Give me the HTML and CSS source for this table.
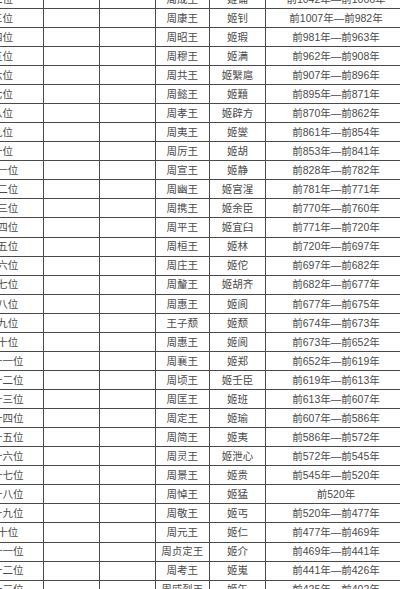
FILE: index.html
```html
<!DOCTYPE html>
<html lang="zh-CN">
<head>
<meta charset="utf-8">
<title>周朝君主列表</title>
<link rel="stylesheet" href="styles.css">
</head>
<body>
<table class="reign-table">
  <colgroup>
    <col class="c-order">
    <col class="c-blank">
    <col class="c-blank2">
    <col class="c-title">
    <col class="c-name">
    <col class="c-years">
  </colgroup>
  <tbody>
    <tr><td>二位</td><td></td><td></td><td>周成王</td><td>姬诵</td><td>前1042年—前1006年</td></tr>
    <tr><td>三位</td><td></td><td></td><td>周康王</td><td>姬钊</td><td>前1007年—前982年</td></tr>
    <tr><td>四位</td><td></td><td></td><td>周昭王</td><td>姬瑕</td><td>前981年—前963年</td></tr>
    <tr><td>五位</td><td></td><td></td><td>周穆王</td><td>姬满</td><td>前962年—前908年</td></tr>
    <tr><td>六位</td><td></td><td></td><td>周共王</td><td>姬繄扈</td><td>前907年—前896年</td></tr>
    <tr><td>七位</td><td></td><td></td><td>周懿王</td><td>姬囏</td><td>前895年—前871年</td></tr>
    <tr><td>八位</td><td></td><td></td><td>周孝王</td><td>姬辟方</td><td>前870年—前862年</td></tr>
    <tr><td>九位</td><td></td><td></td><td>周夷王</td><td>姬燮</td><td>前861年—前854年</td></tr>
    <tr><td>十位</td><td></td><td></td><td>周厉王</td><td>姬胡</td><td>前853年—前841年</td></tr>
    <tr><td>十一位</td><td></td><td></td><td>周宣王</td><td>姬静</td><td>前828年—前782年</td></tr>
    <tr><td>十二位</td><td></td><td></td><td>周幽王</td><td>姬宫湦</td><td>前781年—前771年</td></tr>
    <tr><td>十三位</td><td></td><td></td><td>周携王</td><td>姬余臣</td><td>前770年—前760年</td></tr>
    <tr><td>十四位</td><td></td><td></td><td>周平王</td><td>姬宜臼</td><td>前771年—前720年</td></tr>
    <tr><td>十五位</td><td></td><td></td><td>周桓王</td><td>姬林</td><td>前720年—前697年</td></tr>
    <tr><td>十六位</td><td></td><td></td><td>周庄王</td><td>姬佗</td><td>前697年—前682年</td></tr>
    <tr><td>十七位</td><td></td><td></td><td>周釐王</td><td>姬胡齐</td><td>前682年—前677年</td></tr>
    <tr><td>十八位</td><td></td><td></td><td>周惠王</td><td>姬阆</td><td>前677年—前675年</td></tr>
    <tr><td>十九位</td><td></td><td></td><td>王子颓</td><td>姬颓</td><td>前674年—前673年</td></tr>
    <tr><td>二十位</td><td></td><td></td><td>周惠王</td><td>姬阆</td><td>前673年—前652年</td></tr>
    <tr><td>二十一位</td><td></td><td></td><td>周襄王</td><td>姬郑</td><td>前652年—前619年</td></tr>
    <tr><td>二十二位</td><td></td><td></td><td>周顷王</td><td>姬壬臣</td><td>前619年—前613年</td></tr>
    <tr><td>二十三位</td><td></td><td></td><td>周匡王</td><td>姬班</td><td>前613年—前607年</td></tr>
    <tr><td>二十四位</td><td></td><td></td><td>周定王</td><td>姬瑜</td><td>前607年—前586年</td></tr>
    <tr><td>二十五位</td><td></td><td></td><td>周简王</td><td>姬夷</td><td>前586年—前572年</td></tr>
    <tr><td>二十六位</td><td></td><td></td><td>周灵王</td><td>姬泄心</td><td>前572年—前545年</td></tr>
    <tr><td>二十七位</td><td></td><td></td><td>周景王</td><td>姬贵</td><td>前545年—前520年</td></tr>
    <tr><td>二十八位</td><td></td><td></td><td>周悼王</td><td>姬猛</td><td>前520年</td></tr>
    <tr><td>二十九位</td><td></td><td></td><td>周敬王</td><td>姬丐</td><td>前520年—前477年</td></tr>
    <tr><td>三十位</td><td></td><td></td><td>周元王</td><td>姬仁</td><td>前477年—前469年</td></tr>
    <tr><td>三十一位</td><td></td><td></td><td>周贞定王</td><td>姬介</td><td>前469年—前441年</td></tr>
    <tr><td>三十二位</td><td></td><td></td><td>周考王</td><td>姬嵬</td><td>前441年—前426年</td></tr>
    <tr><td>三十三位</td><td></td><td></td><td>周威烈王</td><td>姬午</td><td>前425年—前402年</td></tr>
  </tbody>
</table>
</body>
</html>
```

FILE: styles.css
```css
html, body {
  margin: 0;
  padding: 0;
  background: #ffffff;
  overflow: hidden;
}

.reign-table {
  border-collapse: collapse;
  table-layout: fixed;
  width: 446px;
  margin: -11.27px 0 0 -39px;
  font-family: "Liberation Sans", "Noto Sans CJK SC", sans-serif;
  font-size: 10.5px;
  color: #4a4a4a;
}

.c-order { width: 82px; }
.c-blank { width: 56px; }
.c-blank2 { width: 55.5px; }
.c-title { width: 54.5px; }
.c-name { width: 56px; }
.c-years { width: 141px; }

.reign-table tr {
  height: 19.07px;
}

.reign-table td {
  border: 1px solid #4a4a4a;
  padding: 0;
  text-align: center;
  vertical-align: middle;
  white-space: nowrap;
  overflow: hidden;
  line-height: 1;
}
```
